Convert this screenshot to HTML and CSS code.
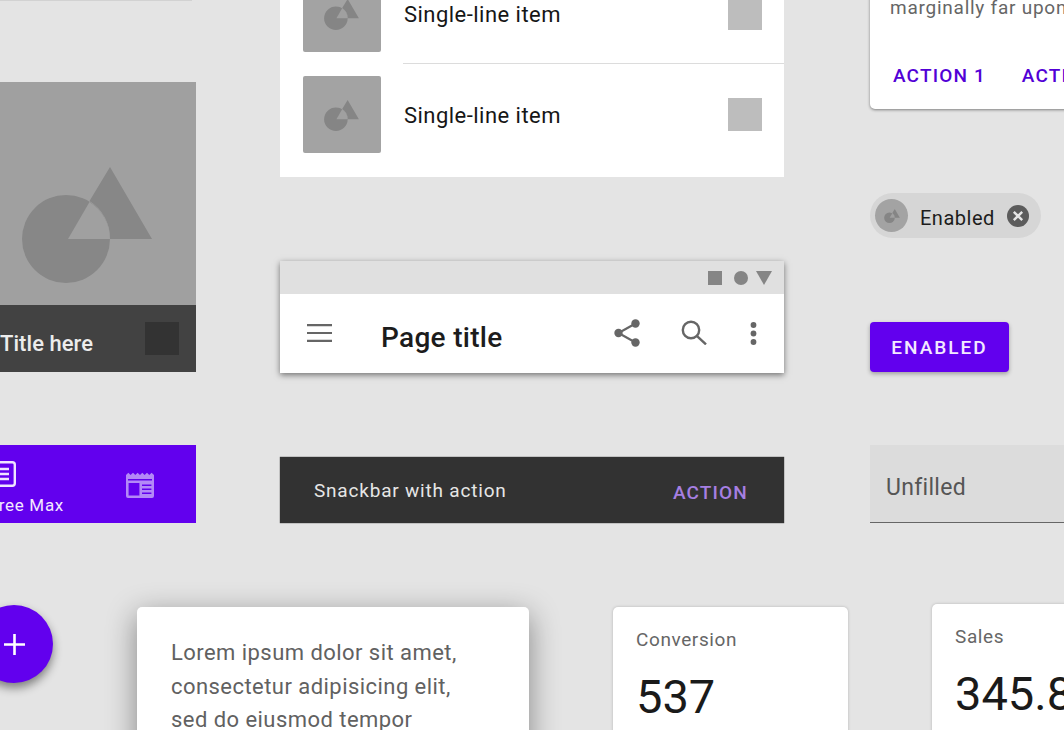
FILE: index.html
```html
<!doctype html>
<html>
<head>
<meta charset="utf-8">
<title>Material components</title>
<link rel="stylesheet" href="styles.css">
</head>
<body>
<svg class="defs" width="0" height="0">
	<symbol id="shapes" viewBox="0 0 130 116">
		<circle cx="44" cy="72" r="44"/>
		<path d="M88 0 L130 72 H88 A44 44 0 0 0 67.5 34 Z"/>
		<path class="shape-cut" d="M46 72 L67.5 35 A44 44 0 0 1 88 72 Z"/>
	</symbol>
</svg>

<div class="canvas">
	<div class="top-line"></div>

	<div class="image-tile">
		<div class="image-area">
			<svg class="shape-big"><use href="#shapes"/></svg>
		</div>
		<div class="image-bar">
			<span class="image-title">Title here</span>
			<span class="image-square"></span>
		</div>
	</div>

	<div class="list-card">
		<div class="list-row list-row-first">
			<div class="thumb"><svg class="shape-small"><use href="#shapes"/></svg></div>
			<span class="list-text">Single-line item</span>
			<span class="list-square"></span>
		</div>
		<div class="list-divider"></div>
		<div class="list-row list-row-last">
			<div class="thumb"><svg class="shape-small"><use href="#shapes"/></svg></div>
			<span class="list-text">Single-line item</span>
			<span class="list-square"></span>
		</div>
	</div>

	<div class="action-card">
		<p class="action-text">marginally far upon</p>
		<div class="action-row">
			<span class="action-link">ACTION 1</span>
			<span class="action-link">ACTION 2</span>
		</div>
	</div>

	<div class="chip">
		<span class="chip-avatar"><svg class="shape-tiny"><use href="#shapes"/></svg></span>
		<span class="chip-label">Enabled</span>
		<svg class="chip-close" viewBox="0 0 22 22">
			<circle cx="11" cy="11" r="11" fill="#5c5c5c"/>
			<path d="M6.8 6.8 L15.2 15.2 M15.2 6.8 L6.8 15.2" stroke="#e6e6e6" stroke-width="2.4"/>
		</svg>
	</div>

	<div class="app-bar">
		<div class="status-bar">
			<span class="status-square"></span>
			<span class="status-circle"></span>
			<svg class="status-triangle" viewBox="0 0 16 14"><path d="M0 0 H16 L8 14 Z"/></svg>
		</div>
		<div class="toolbar">
			<svg class="icon-menu" viewBox="0 0 25 18">
				<path d="M0 1.2 H25 M0 9 H25 M0 16.8 H25" stroke="#666" stroke-width="2.2"/>
			</svg>
			<span class="page-title">Page title</span>
			<svg class="icon-share" viewBox="0 0 26 28" fill="#666">
				<circle cx="21.5" cy="4.5" r="4.2"/>
				<circle cx="4.5" cy="14" r="4.2"/>
				<circle cx="21.5" cy="23.5" r="4.2"/>
				<path d="M21.5 4.5 L4.5 14 L21.5 23.5" fill="none" stroke="#666" stroke-width="2.2"/>
			</svg>
			<svg class="icon-search" viewBox="0 0 26 25" fill="none" stroke="#666" stroke-width="2.4">
				<circle cx="10" cy="10" r="8.2"/>
				<path d="M15.8 15.8 L25 24.4"/>
			</svg>
			<svg class="icon-more" viewBox="0 0 7 23" fill="#666">
				<circle cx="3.5" cy="3" r="2.9"/>
				<circle cx="3.5" cy="11.5" r="2.9"/>
				<circle cx="3.5" cy="20" r="2.9"/>
			</svg>
		</div>
	</div>

	<div class="raised-button">ENABLED</div>

	<div class="tab-bar">
		<div class="tab tab-active">
			<svg class="icon-doc" viewBox="0 0 28 26" fill="none" stroke="#efe4ff" stroke-width="2.4">
				<rect x="1.2" y="1.2" width="25.6" height="23.6" rx="2.5"/>
				<path d="M8 8 H21 M8 13 H21 M8 18 H21" stroke-width="2.6"/>
			</svg>
			<span class="tab-label">Three Max</span>
		</div>
		<svg class="icon-news" viewBox="0 0 28 26" fill="#b388f7">
			<path d="M0 3 L2.3 0.8 L4.6 3 L7 0.8 L9.3 3 L11.6 0.8 L14 3 L16.3 0.8 L18.6 3 L21 0.8 L23.3 3 L25.6 0.8 L28 3 V24 a2 2 0 0 1 -2 2 H2 a2 2 0 0 1 -2 -2 Z"/>
			<path fill="#6200ee" d="M2 7 H26 V8.6 H2 Z M2.6 11 H13.4 V23.4 H2.6 Z M16 12.4 H25.4 V14 H16 Z M16 16.4 H25.4 V18 H16 Z M16 20.4 H25.4 V22 H16 Z"/>
		</svg>
	</div>

	<div class="snackbar">
		<span class="snack-text">Snackbar with action</span>
		<span class="snack-action">ACTION</span>
	</div>

	<div class="text-field"><span class="field-label">Unfilled</span></div>

	<div class="fab">
		<svg class="icon-plus" viewBox="0 0 21 21"><path d="M0 10.5 H21 M10.5 0 V21" stroke="#fff" stroke-width="2.6"/></svg>
	</div>

	<div class="lorem-card">
		<p class="lorem-text">Lorem ipsum dolor sit amet,<br>consectetur adipisicing elit,<br>sed do eiusmod tempor</p>
	</div>

	<div class="stat-card stat-conversion">
		<div class="stat-label">Conversion</div>
		<div class="stat-value">537</div>
	</div>

	<div class="stat-card stat-sales">
		<div class="stat-label">Sales</div>
		<div class="stat-value">345.8</div>
	</div>
</div>
</body>
</html>
```

FILE: styles.css
```css
*{box-sizing: border-box;}
body{
	margin: 0;
	background-color: #e4e4e4;
	font-family: Roboto,"Liberation Sans",sans-serif;
	overflow: hidden;
}
.defs{
	position: absolute;
}
.canvas{
	position: relative;
	width: 1064px;
	height: 730px;
	overflow: hidden;
	background-color: #e4e4e4;
}
.canvas > div{
	position: absolute;
}
.top-line{
	left: 0;
	top: 0;
	width: 192px;
	height: 1px;
	background-color: #d2d2d2;
}

/* image tile */
.image-tile{
	left: 0;
	top: 82px;
	width: 196px;
	height: 290px;
	display: flex;
	flex-direction: column;
}
.image-area{
	height: 223px;
	background-color: #a0a0a0;
	padding: 85px 0 0 22px;
}
.shape-big{
	display: block;
	width: 130px;
	height: 116px;
	fill: #878787;
}
.shape-cut{
	fill: #a0a0a0;
}
.image-bar{
	flex: 1;
	background-color: #424242;
	display: flex;
	align-items: center;
	justify-content: space-between;
	padding: 0 17px 0 0;
}
.image-title{
	font-size: 22px;
	font-weight: 500;
	letter-spacing: 0.05px;
	color: #ececec;
	margin-top: 9px;
}
.image-square{
	width: 34px;
	height: 33px;
	background-color: #333;
}

/* list */
.list-card{
	left: 280px;
	top: -37px;
	width: 504px;
	background-color: #fff;
}
.list-row{
	display: flex;
	align-items: center;
	padding: 12px 22px 0 23px;
}
.list-row-first{
	height: 100px;
	padding-bottom: 11px;
}
.list-row-last{
	height: 113px;
	padding-bottom: 24px;
}
.list-divider{
	height: 1px;
	margin-left: 123px;
	background-color: #dcdcdc;
}
.thumb{
	width: 78px;
	height: 77px;
	border-radius: 2px;
	background-color: #a3a3a3;
	display: flex;
	padding: 24px 0 0 21px;
}
.shape-small{
	width: 35px;
	height: 31px;
	fill: #858585;
}
.thumb .shape-cut{
	fill: #c0c0c0;
}
.list-text{
	margin-left: 23px;
	margin-top: 1px;
	font-size: 22px;
	letter-spacing: 0.47px;
	color: #161616;
}
.list-square{
	margin-left: auto;
	width: 34px;
	height: 33px;
	background-color: #bdbdbd;
}

/* card with actions */
.action-card{
	left: 870px;
	top: -40px;
	width: 300px;
	height: 149px;
	background-color: #fff;
	border-radius: 5px;
	box-shadow: 0 1px 3px rgba(0, 0, 0, 0.45);
	padding: 35px 0 0 20px;
	white-space: nowrap;
}
.action-text{
	margin: 0;
	font-size: 19px;
	letter-spacing: 0.75px;
	line-height: 26px;
	color: #666;
}
.action-row{
	display: flex;
	gap: 36px;
	margin-top: 43px;
	padding-left: 3px;
}
.action-link{
	font-size: 19px;
	font-weight: 500;
	letter-spacing: 1.15px;
	color: #5200d6;
}

/* chip */
.chip{
	left: 870px;
	top: 193px;
	width: 171px;
	height: 45px;
	border-radius: 23px;
	background-color: #d6d6d6;
	display: flex;
	align-items: center;
	padding-left: 5px;
}
.chip-avatar{
	width: 33px;
	height: 33px;
	border-radius: 50%;
	background-color: #a3a3a3;
	display: flex;
	align-items: center;
	justify-content: center;
}
.shape-tiny{
	width: 16px;
	height: 14px;
	fill: #858585;
}
.chip-label{
	margin-left: 12px;
	font-size: 20px;
	letter-spacing: 0.5px;
	color: #1c1c1c;
	margin-top: 5px;
}
.chip-close{
	width: 22px;
	height: 22px;
	margin-left: 12px;
}

/* app bar */
.app-bar{
	left: 280px;
	top: 261px;
	width: 504px;
	height: 112px;
	box-shadow: 0 2px 6px rgba(0, 0, 0, 0.5);
}
.status-bar{
	height: 33px;
	background-color: #e0e0e0;
	display: flex;
	align-items: center;
	justify-content: flex-end;
	padding: 0 12px 0 0;
}
.status-square{
	width: 14px;
	height: 14px;
	background-color: #858585;
}
.status-circle{
	width: 14px;
	height: 14px;
	border-radius: 50%;
	background-color: #858585;
	margin-left: 12px;
}
.status-triangle{
	width: 16px;
	height: 14px;
	margin-left: 8px;
	fill: #858585;
}
.toolbar{
	height: 79px;
	background-color: #fff;
	display: flex;
	align-items: center;
}
.icon-menu{
	width: 25px;
	height: 18px;
	margin: -2px 0 0 27px;
}
.page-title{
	margin-left: 49px;
	font-size: 28px;
	font-weight: 500;
	letter-spacing: 0.3px;
	color: #1c1c1c;
	margin-top: 8px;
}
.icon-share{
	width: 26px;
	height: 28px;
	margin-left: auto;
	margin-top: -2px;
}
.icon-search{
	width: 26px;
	height: 25px;
	margin-left: 41px;
	margin-top: -2px;
}
.icon-more{
	width: 7px;
	height: 23px;
	margin: -1px 27px 0 43px;
}

/* button */
.raised-button{
	left: 870px;
	top: 322px;
	width: 139px;
	height: 50px;
	border-radius: 4px;
	background-color: #6200ee;
	box-shadow: 0 2px 4px rgba(0, 0, 0, 0.3);
	display: flex;
	align-items: center;
	justify-content: center;
	font-size: 19px;
	font-weight: 500;
	letter-spacing: 2px;
	color: #f3e9ff;
}

/* tabs */
.tab-bar{
	left: 0;
	top: 445px;
	width: 196px;
	height: 78px;
	background-color: #6200ee;
	display: flex;
	align-items: flex-start;
}
.tab{
	display: flex;
	flex-direction: column;
	align-items: flex-end;
	margin-left: -30px;
	width: 94px;
	padding-top: 16px;
}
.icon-doc{
	width: 28px;
	height: 26px;
	margin-right: 48px;
}
.tab-label{
	margin-top: 8px;
	font-size: 17px;
	letter-spacing: 0.7px;
	color: #f3e9ff;
	white-space: nowrap;
}
.icon-news{
	width: 28px;
	height: 26px;
	margin: 27px 0 0 62px;
}

/* snackbar */
.snackbar{
	left: 280px;
	top: 457px;
	width: 504px;
	height: 66px;
	background-color: #323232;
	box-shadow: 0 0 1px rgba(0, 0, 0, 0.9);
	display: flex;
	align-items: center;
	justify-content: space-between;
	padding: 5px 36px 0 34px;
}
.snack-text{
	font-size: 19px;
	letter-spacing: 0.8px;
	color: #e6e6e6;
	margin-top: -4px;
}
.snack-action{
	font-size: 19px;
	font-weight: 500;
	letter-spacing: 1.15px;
	color: #a67fe2;
}

/* text field */
.text-field{
	left: 870px;
	top: 445px;
	width: 300px;
	height: 78px;
	background-color: #dcdcdc;
	border-bottom: 1px solid #666;
	padding: 29px 0 0 16px;
}
.field-label{
	font-size: 23px;
	letter-spacing: 0.3px;
	color: #555;
}

/* fab */
.fab{
	left: -25px;
	top: 605px;
	width: 78px;
	height: 78px;
	border-radius: 50%;
	background-color: #6200ee;
	box-shadow: 0 5px 10px rgba(0, 0, 0, 0.45);
	display: flex;
	align-items: center;
	justify-content: center;
}
.icon-plus{
	width: 21px;
	height: 21px;
}

/* cards along the bottom */
.lorem-card{
	left: 137px;
	top: 607px;
	width: 392px;
	height: 200px;
	background-color: #fff;
	border-radius: 5px;
	box-shadow: 0 8px 30px rgba(0, 0, 0, 0.42);
	padding: 29px 0 0 34px;
}
.lorem-text{
	margin: 0;
	font-size: 22px;
	line-height: 33.5px;
	letter-spacing: 0.45px;
	color: #616161;
}
.stat-card{
	background-color: #fff;
	border-radius: 5px;
	box-shadow: 0 0 3px rgba(0, 0, 0, 0.22);
	height: 200px;
}
.stat-conversion{
	left: 613px;
	top: 607px;
	width: 235px;
	padding: 21px 0 0 23px;
}
.stat-sales{
	left: 932px;
	top: 604px;
	width: 235px;
	padding: 21px 0 0 23px;
}
.stat-label{
	font-size: 19px;
	letter-spacing: 0.6px;
	color: #666;
}
.stat-value{
	margin-top: 18px;
	font-size: 47px;
	color: #1a1a1a;
}
```
